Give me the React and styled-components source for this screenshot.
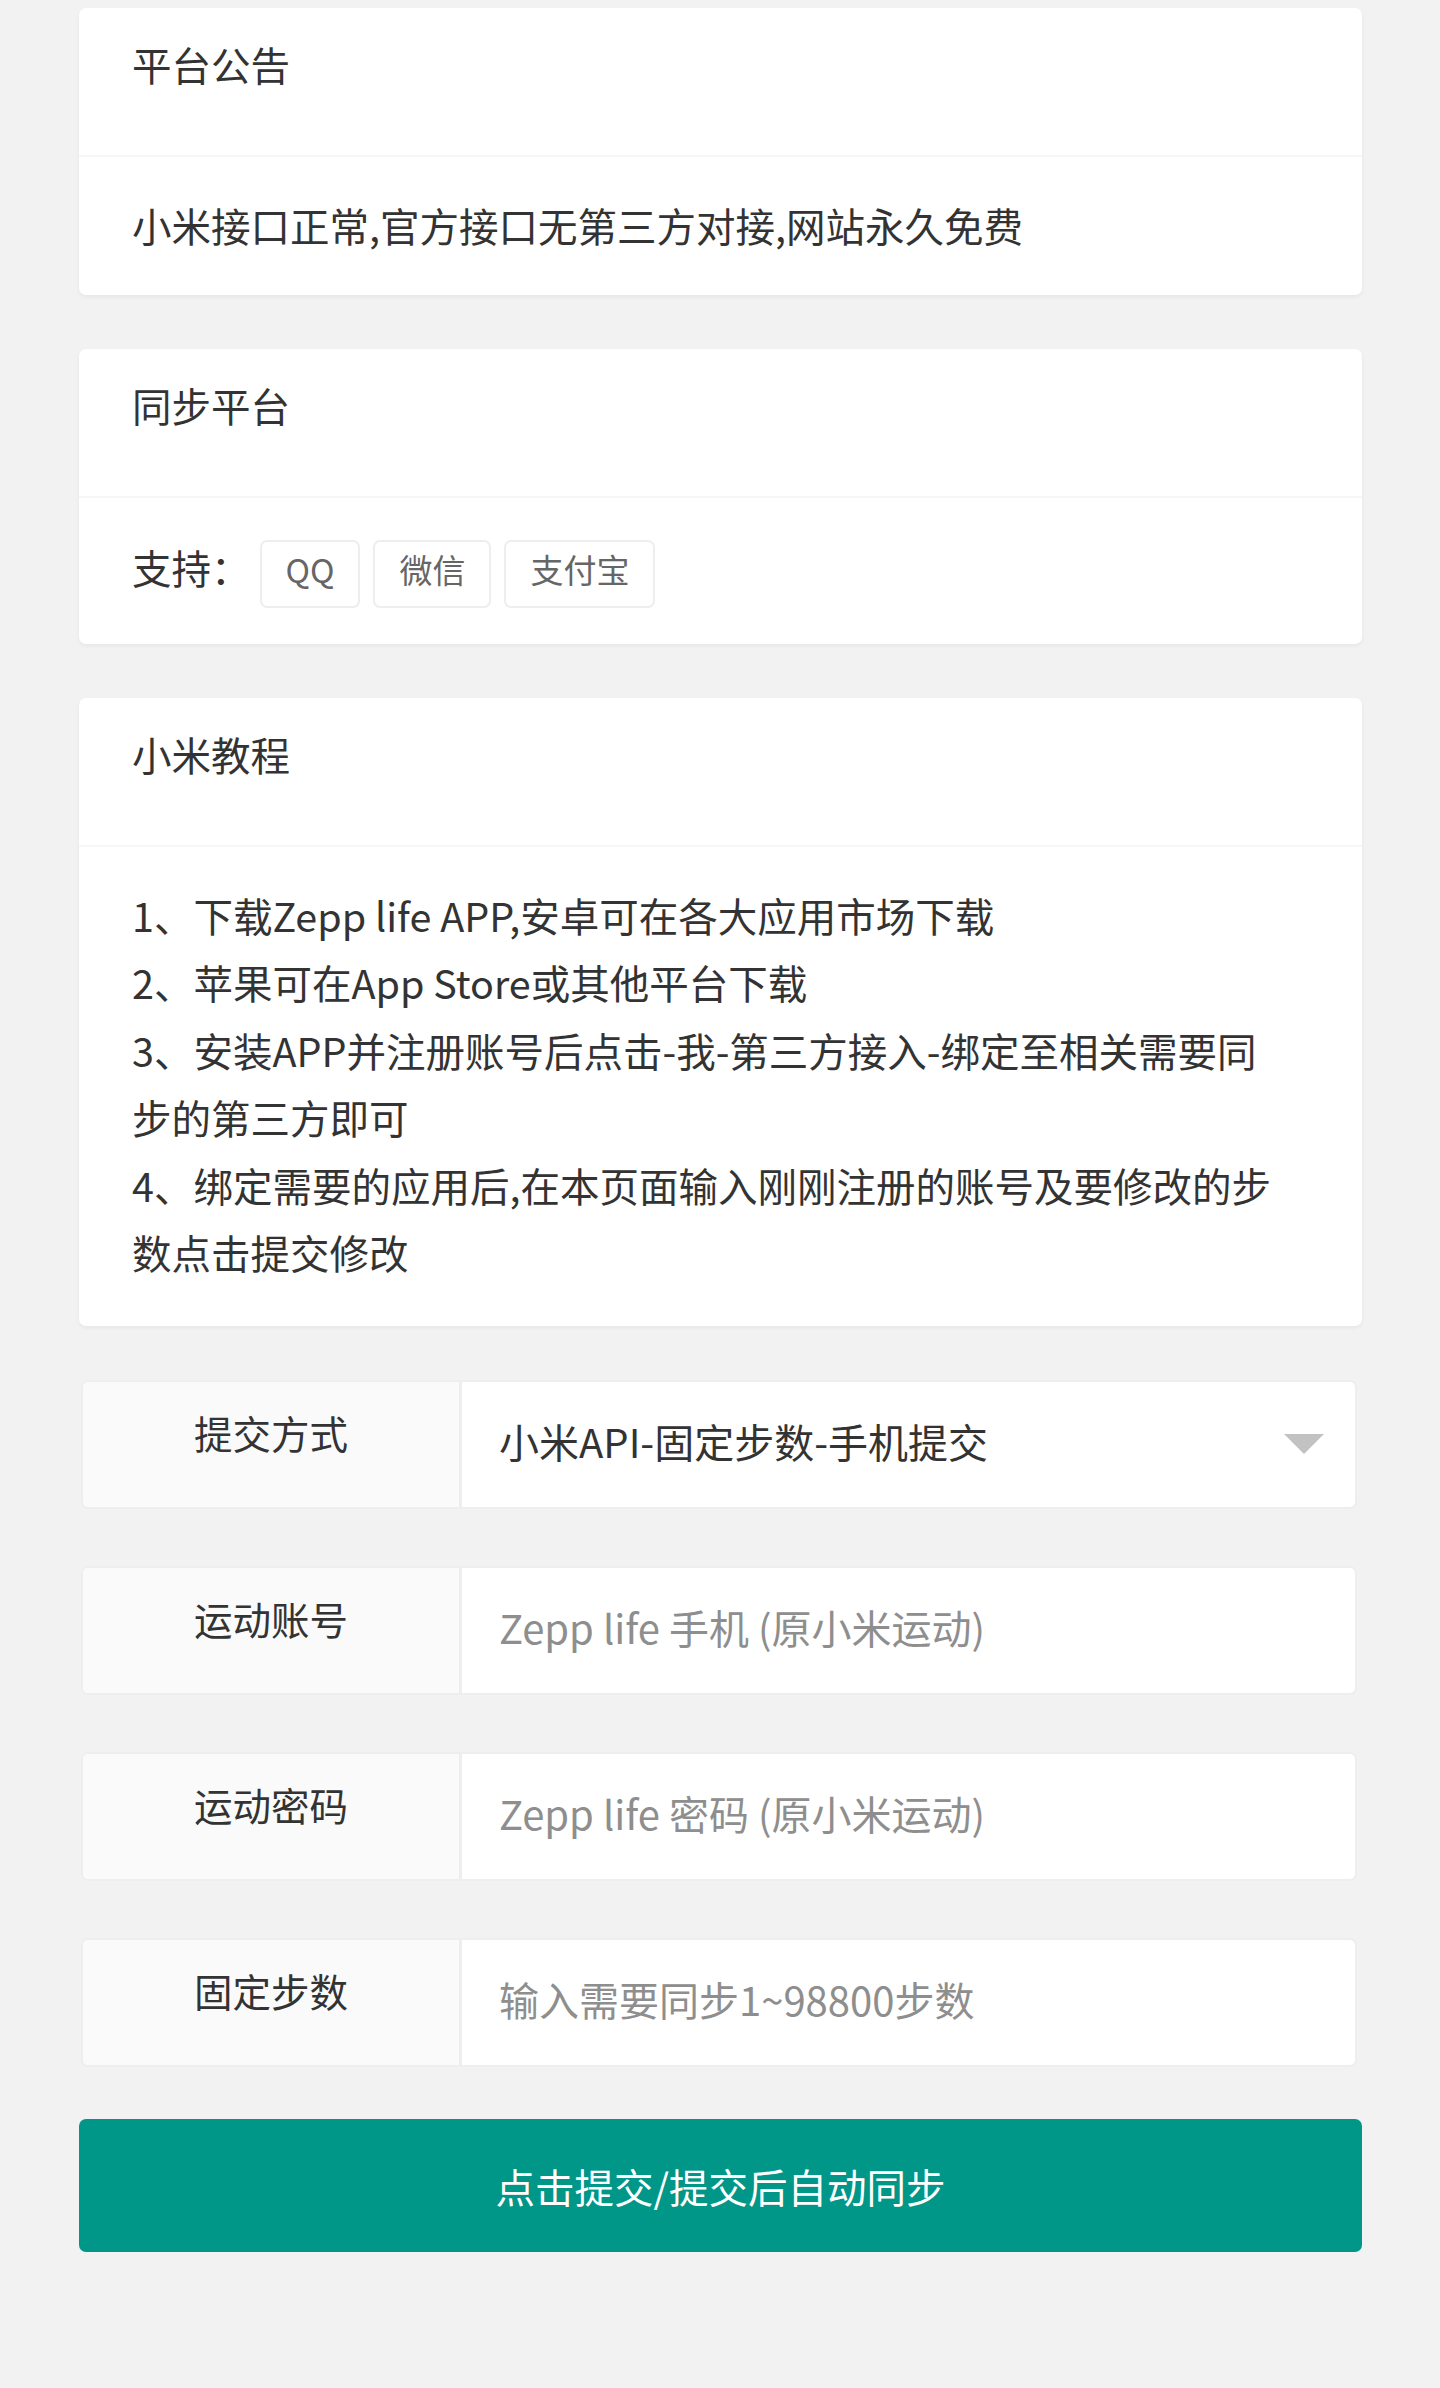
import React from 'react';
import styled, { createGlobalStyle } from 'styled-components';

const GlobalStyle = createGlobalStyle`
  * {
    box-sizing: border-box;
  }
  html,
  body {
    margin: 0;
    padding: 0;
    background: #f2f2f2;
  }
  body {
    font-family: 'Noto Sans CJK SC', 'Noto Sans', sans-serif;
    color: #333;
  }
`;

const Page = styled.div`
  min-height: 2388px;
  padding: 8px 78px 60px 79px;
`;

const Card = styled.div`
  background: #fff;
  border-radius: 7px;
  box-shadow: 0 2px 4px rgba(0, 0, 0, 0.05);
  margin-bottom: 54px;
`;

const CardHeader = styled.div`
  height: 149px;
  padding: 22px 53px 0;
  border-bottom: 2.5px solid #f6f6f6;
  font-size: 39.5px;
  line-height: 67px;
  color: #333;
`;

const CardBody = styled.div`
  padding: 34px ${(p) => p.$padRight || 53}px ${(p) => p.$padBottom || 36}px 53px;
  font-size: 39.5px;
  line-height: 67.5px;
  color: #333;
`;

const SupportLine = styled.div`
  display: flex;
  align-items: center;
  height: 76px;
`;

const SupportLabel = styled.span`
  margin: 0 9px 6px 0;
`;

const Tag = styled.span`
  display: inline-block;
  height: 68px;
  padding: 0 24px;
  margin: 8px 13px 0 0;
  border: 2.5px solid #eee;
  border-radius: 7px;
  font-size: 33px;
  line-height: 54px;
  color: #666;
`;

const FormRow = styled.div`
  display: flex;
  height: 129px;
  margin: 0 5px 57px 2px;
  border: 2px solid #eee;
  border-radius: 7px;
  background: #fff;
  overflow: hidden;
`;

const FormLabel = styled.label`
  width: 379px;
  flex-shrink: 0;
  padding-top: 20px;
  background: #fafafa;
  border-right: 3px solid #eee;
  text-align: center;
  font-size: 38.5px;
  line-height: 60px;
  color: #333;
`;

const FormField = styled.div`
  flex: 1;
  display: flex;
  align-items: center;
  padding: 0 31px 6px 37px;
`;

const TextInput = styled.input`
  width: 100%;
  height: 100%;
  border: none;
  outline: none;
  background: transparent;
  padding: 0;
  font-family: inherit;
  font-size: 40px;
  color: #333;

  &::placeholder {
    color: #8e8e8e;
  }
`;

const SelectValue = styled.span`
  flex: 1;
  font-size: 40px;
  color: #333;
`;

const Caret = styled.span`
  width: 0;
  height: 0;
  margin-top: 6px;
  border-left: 20.5px solid transparent;
  border-right: 20.5px solid transparent;
  border-top: 20px solid #c2c2c2;
`;

const SubmitButton = styled.button`
  display: block;
  width: 100%;
  height: 133px;
  margin-top: -5px;
  border: none;
  border-radius: 7px;
  background: #009688;
  color: #fff;
  font-family: inherit;
  font-size: 39.5px;
  cursor: pointer;
`;

const steps = [
  '1、下载Zepp life APP,安卓可在各大应用市场下载',
  '2、苹果可在App Store或其他平台下载',
  '3、安装APP并注册账号后点击-我-第三方接入-绑定至相关需要同步的第三方即可',
  '4、绑定需要的应用后,在本页面输入刚刚注册的账号及要修改的步数点击提交修改',
];

const fields = [
  { label: '运动账号', placeholder: 'Zepp life 手机 (原小米运动)' },
  { label: '运动密码', placeholder: 'Zepp life 密码 (原小米运动)', type: 'password' },
  { label: '固定步数', placeholder: '输入需要同步1~98800步数' },
];

const App = () => (
  <>
    <GlobalStyle />
    <Page>
      {/* 公告 */}
      <Card>
        <CardHeader>平台公告</CardHeader>
        <CardBody>小米接口正常,官方接口无第三方对接,网站永久免费</CardBody>
      </Card>

      <Card>
        <CardHeader>同步平台</CardHeader>
        <CardBody>
          <SupportLine>
            <SupportLabel>支持：</SupportLabel>
            <Tag>QQ</Tag>
            <Tag>微信</Tag>
            <Tag>支付宝</Tag>
          </SupportLine>
        </CardBody>
      </Card>

      <Card>
        <CardHeader>小米教程</CardHeader>
        <CardBody $padRight={77} $padBottom={40}>
          {steps.map((s) => (
            <div key={s}>{s}</div>
          ))}
        </CardBody>
      </Card>

      {/* 表单 */}
      <FormRow>
        <FormLabel>提交方式</FormLabel>
        <FormField>
          <SelectValue>小米API-固定步数-手机提交</SelectValue>
          <Caret />
        </FormField>
      </FormRow>

      {fields.map((f) => (
        <FormRow key={f.label}>
          <FormLabel>{f.label}</FormLabel>
          <FormField>
            <TextInput type={f.type || 'text'} placeholder={f.placeholder} />
          </FormField>
        </FormRow>
      ))}

      <SubmitButton>点击提交/提交后自动同步</SubmitButton>
    </Page>
  </>
);

export default App;
